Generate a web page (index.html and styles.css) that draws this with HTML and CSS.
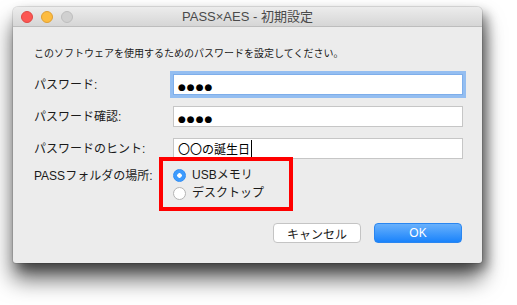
FILE: index.html
```html
<!DOCTYPE html>
<html lang="ja">
<head>
    <meta charset="UTF-8">
    <title>PASS×AES - 初期設定</title>
    <link rel="stylesheet" href="styles.css">
</head>
<body>
    <div class="desktop">
        <div class="window">
            <div class="titlebar">
                <div class="lights">
                    <span class="light close"></span>
                    <span class="light minimize"></span>
                    <span class="light zoom"></span>
                </div>
                <div class="title">PASS×AES - 初期設定</div>
            </div>

            <div class="content">
                <p class="intro">このソフトウェアを使用するためのパスワードを設定してください。</p>

                <div class="row">
                    <label class="label">パスワード:</label>
                    <div class="field focused"><span class="dots">●●●●</span></div>
                </div>
                <div class="row">
                    <label class="label">パスワード確認:</label>
                    <div class="field"><span class="dots">●●●●</span></div>
                </div>
                <div class="row">
                    <label class="label">パスワードのヒント:</label>
                    <div class="field"><span class="caret">〇〇の誕生日</span></div>
                </div>

                <!-- 保存場所 -->
                <div class="row row-radio">
                    <label class="label label-radio">PASSフォルダの場所:</label>
                    <div class="radio-group">
                        <div class="radio-item">
                            <span class="radio checked"></span>
                            <span>USBメモリ</span>
                        </div>
                        <div class="radio-item">
                            <span class="radio"></span>
                            <span>デスクトップ</span>
                        </div>
                    </div>
                </div>

                <div class="buttons">
                    <button class="btn btn-cancel">キャンセル</button>
                    <button class="btn btn-ok">OK</button>
                </div>
            </div>
        </div>
    </div>
</body>
</html>
```

FILE: styles.css
```css
html, body {
    margin: 0;
    background-color: #fff;
}

body {
    font-family: "Liberation Sans", "Noto Sans CJK JP", sans-serif;
    color: #1a1a1a;
}

.desktop {
    width: 517px;
    height: 305px;
    padding: 7px 0 0 13px;
    box-sizing: border-box;
}

.window {
    width: 469px;
    height: 256px;
    background-color: #ececec;
    border-radius: 5px 5px 3px 3px;
    box-shadow: 0 16px 22px rgba(0,0,0,0.62), 5px 6px 12px rgba(0,0,0,0.4), 0 0 0 1px rgba(0,0,0,0.1);
    overflow: hidden;
}

.titlebar {
    position: relative;
    height: 20px;
    background: linear-gradient(#ececec, #d6d6d6);
    border-bottom: 1px solid #bdbdbd;
    box-sizing: border-box;
}

.lights {
    display: flex;
    gap: 8px;
    padding: 4px 0 0 8px;
}

.light {
    width: 12px;
    height: 12px;
    border-radius: 50%;
    box-sizing: border-box;
}

.close {
    background-color: #fc5753;
    border: 1px solid #df4744;
}

.minimize {
    background-color: #fdbc40;
    border: 1px solid #de9f34;
}

.zoom {
    background-color: #d0d0d0;
    border: 1px solid #bdbdbd;
}

.title {
    position: absolute;
    top: 0;
    left: 0;
    right: 0;
    text-align: center;
    font-size: 13px;
    line-height: 20px;
    color: #4a4a4a;
}

.content {
    padding: 20px 19px 0 21px;
}

.intro {
    margin: 0 0 13px 0;
    font-size: 10px;
    line-height: 14px;
}

.row {
    display: flex;
    align-items: center;
    margin-bottom: 11px;
}

.label {
    width: 139px;
    font-size: 12px;
    line-height: 16px;
}

.field {
    width: 290px;
    height: 21px;
    background-color: #fff;
    border: 1px solid #c6c6c6;
    box-sizing: border-box;
    padding: 0 4px;
    font-size: 12px;
    line-height: 19px;
    color: #000;
    font-family: "Noto Sans CJK JP", sans-serif;
}

.field.focused {
    border-color: #7eaeea;
    box-shadow: 0 0 0 3px #94bef1;
}

.dots {
    font-family: "DejaVu Sans", sans-serif;
    font-size: 9px;
    letter-spacing: 1px;
}

.caret {
    border-right: 1px solid #000;
    padding-right: 1px;
}

.row-radio {
    align-items: flex-start;
    margin-top: -13px;
    margin-bottom: 12px;
}

.label-radio {
    padding-top: 11px;
}

.radio-group {
    margin-left: -14px;
    width: 134px;
    height: 54px;
    border: 4px solid #f00;
    box-sizing: border-box;
    padding: 8px 0 0 10px;
    display: flex;
    flex-direction: column;
    gap: 5px;
}

.radio-item {
    display: flex;
    align-items: center;
    gap: 6px;
    font-size: 12px;
    line-height: 13px;
}

.radio {
    width: 13px;
    height: 13px;
    border-radius: 50%;
    background-color: #fff;
    border: 1px solid #b4b4b4;
    box-sizing: border-box;
}

.radio.checked {
    background: radial-gradient(circle, #fff 0, #fff 2px, #3d9bfd 2.5px);
    border-color: #2f8cf4;
}

.buttons {
    display: flex;
    justify-content: flex-end;
    gap: 13px;
    margin-right: 1px;
}

.btn {
    width: 88px;
    height: 20px;
    border-radius: 4px;
    font-family: "Liberation Sans", "Noto Sans CJK JP", sans-serif;
    font-size: 12px;
    padding: 0;
}

.btn-cancel {
    background-color: #fff;
    border: 1px solid #c4c4c4;
    color: #1a1a1a;
}

.btn-ok {
    background: linear-gradient(#69b1fc, #1a83fb);
    border: 1px solid #2a86f0;
    color: #fff;
}
```
